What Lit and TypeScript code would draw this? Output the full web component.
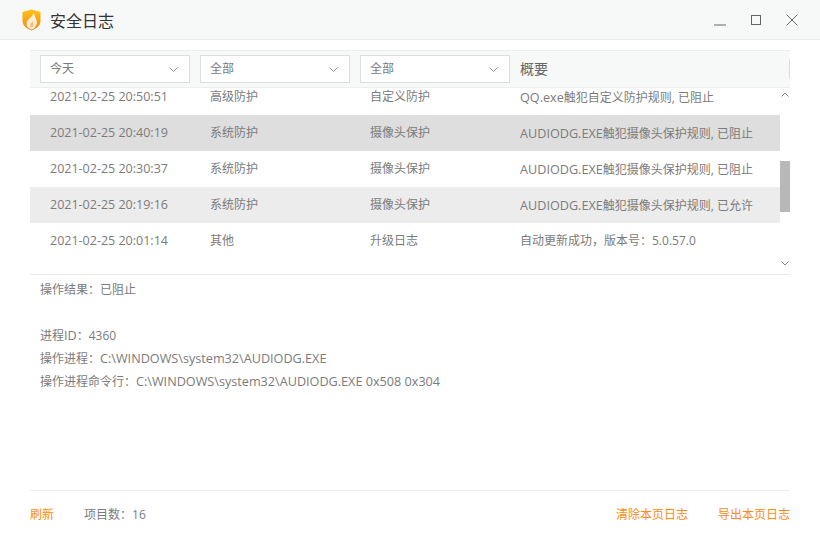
import { LitElement, html, css, svg } from "lit";
import { customElement } from "lit/decorators.js";

const rows = [
  ["2021-02-25 20:50:51", "高级防护", "自定义防护", "QQ.exe触犯自定义防护规则, 已阻止", ""],
  ["2021-02-25 20:40:19", "系统防护", "摄像头保护", "AUDIODG.EXE触犯摄像头保护规则, 已阻止", "sel"],
  ["2021-02-25 20:30:37", "系统防护", "摄像头保护", "AUDIODG.EXE触犯摄像头保护规则, 已阻止", ""],
  ["2021-02-25 20:19:16", "系统防护", "摄像头保护", "AUDIODG.EXE触犯摄像头保护规则, 已允许", "alt"],
  ["2021-02-25 20:01:14", "其他", "升级日志", "自动更新成功，版本号：5.0.57.0", ""],
];

const chev = svg`<path d="M.5.5l4 4 4-4" fill="none" stroke="#999" stroke-width="1"/>`;

/* Runs of Latin text are set slightly larger than the CJK around them. */
const lat = (s: string) =>
  s.split(/([A-Za-z][\x20-\x7e]*)/).map((p, i) => (i % 2 ? html`<span class="lat">${p}</span>` : p));

@customElement("app-root")
export class AppRoot extends LitElement {
  static styles = css`
    :host { display: block; width: 820px; height: 540px; background: #fff; overflow: hidden;
      font-family: "Open Sans", "Noto Sans CJK SC", sans-serif; font-size: 12px; color: #7b7b7b; line-height: 18px; }
    .lat { font-size: 12.65px; }
    .title { height: 39px; background: #f7f8f8; border-bottom: 1px solid #ececec; display: flex; align-items: center; padding-left: 22px; }
    .title h1 { margin: 0 0 0 9px; font-size: 16px; font-weight: 400; color: #333; line-height: 22px; font-family: "Noto Sans CJK SC", sans-serif; }
    .logo { display: block; }
    .wins { margin-left: auto; display: flex; align-items: flex-start; height: 39px; }
    .wins svg { display: block; }
    .wins .min { margin: 24px 0 0 0; }
    .wins .max { margin: 15px 0 0 25px; }
    .wins .close { margin: 14px 22px 0 25px; }
    .main { margin: 10px 30px 0; }
    .head { height: 36px; background: #f7f8f8; border-top: 1px solid #eee; border-bottom: 1px solid #eee; display: flex; align-items: center; padding-left: 10px; position: relative; }
    .sel { box-sizing: border-box; width: 150px; height: 28px; margin-right: 10px; background: #fff; border: 1px solid #ddd; display: flex; align-items: center; justify-content: space-between; padding: 0 11px 0 9px; }
    .sel svg { margin-top: 1px; }
    .sum { font-size: 14px; color: #666; }
    .sep { position: absolute; right: 0; top: 8px; height: 19px; width: 1px; background: #ddd; }
    .listwrap { display: flex; height: 186px; border-bottom: 1px solid #e8e8e8; overflow: hidden; }
    .list { width: 750px; }
    .row { height: 36px; display: flex; align-items: center; padding-left: 20px; box-sizing: border-box; }
    .row:first-child { margin-top: -9px; }
    .row.sel2 { background: #dedede; }
    .row.alt { background: #ececec; }
    .c1 { width: 160px; font-size: 12.5px; } .c2 { width: 160px; } .c3 { width: 150px; }
    .bar { width: 10px; display: flex; flex-direction: column; align-items: center; position: relative; }
    .bar .up { margin-top: 4px; }
    .bar .down { margin-top: auto; margin-bottom: 8px; }
    .thumb { position: absolute; left: 0; top: 73px; width: 10px; height: 51px; background: #b8b8b8; }
    .detail { padding: 4px 10px 0; height: 211px; border-bottom: 1px solid #efefef; }
    .detail div { height: 23px; line-height: 21px; }
    .foot { height: 44px; padding-top: 2px; display: flex; align-items: center; }
    .link { color: #ff8a14; }
    .count { margin-left: 30px; }
    .right { margin-left: auto; }
    .right + .link { margin-left: 30px; }
  `;

  render() {
    return html`
      <div class="title">
        <svg class="logo" width="19" height="22" viewBox="0 0 19 22">
          <defs>
            <linearGradient id="g" x1="0" y1="0" x2="0" y2="1">
              <stop offset="0" stop-color="#ffc21a"/><stop offset="1" stop-color="#f7860d"/>
            </linearGradient>
          </defs>
          <path d="M0.5 3L9.5 0.5 18.5 3V12C18.5 16.5 14 20 9.5 21.5 5 20 0.5 16.5 0.5 12Z" fill="url(#g)"/>
          <path d="M12 3C12 8 15.5 10 14.8 14.5 14.2 18 11.5 20 9.5 20.6 6 19.5 4 16.5 4.8 13 5.5 10 10.5 8.5 12 3Z" fill="#fdeede"/>
          <path d="M10.5 11.5C10.8 13.5 12 15 11.2 17 10.8 18 9.8 18.5 9 18.5 7.8 17.5 7.6 16 8.2 15 8.8 14 10.2 13.3 10.5 11.5Z" fill="#fbc27c"/>
        </svg>
        <h1>安全日志</h1>
        <div class="wins">
          <svg class="min" width="12" height="2" viewBox="0 0 12 2"><path d="M0 1h12" stroke="#666" stroke-width="1"/></svg>
          <svg class="max" width="10" height="10" viewBox="0 0 10 10"><rect x=".5" y=".5" width="9" height="9" fill="none" stroke="#666"/></svg>
          <svg class="close" width="12" height="12" viewBox="0 0 12 12"><path d="M.5.5l11 11M11.5.5l-11 11" stroke="#666" stroke-width="1" fill="none"/></svg>
        </div>
      </div>
      <div class="main">
        <div class="head">
          ${["今天", "全部", "全部"].map(
            (t) => html`<div class="sel"><span>${t}</span><svg width="9" height="5" viewBox="0 0 9 5">${chev}</svg></div>`
          )}
          <span class="sum">概要</span>
          <div class="sep"></div>
        </div>
        <div class="listwrap">
          <div class="list">
            ${rows.map(
              (r) => html`<div class="row ${r[4] === "sel" ? "sel2" : r[4]}">
                <span class="c1">${r[0]}</span><span class="c2">${r[1]}</span><span class="c3">${r[2]}</span><span>${lat(r[3])}</span>
              </div>`
            )}
          </div>
          <div class="bar">
            <svg class="up" width="8" height="5" viewBox="0 0 8 5"><path d="M.5 4.5L4 1l3.5 3.5" fill="none" stroke="#888"/></svg>
            <div class="thumb"></div>
            <svg class="down" width="8" height="5" viewBox="0 0 8 5"><path d="M.5.5L4 4 7.5.5" fill="none" stroke="#888"/></svg>
          </div>
        </div>
        <div class="detail">
          <div>操作结果：已阻止</div>
          <div></div>
          <div>进程${lat("ID")}：4360</div>
          <div>操作进程：${lat("C:\\WINDOWS\\system32\\AUDIODG.EXE")}</div>
          <div>操作进程命令行：${lat("C:\\WINDOWS\\system32\\AUDIODG.EXE 0x508 0x304")}</div>
        </div>
        <div class="foot">
          <span class="link">刷新</span>
          <span class="count">项目数：16</span>
          <span class="link right">清除本页日志</span>
          <span class="link">导出本页日志</span>
        </div>
      </div>
    `;
  }
}
